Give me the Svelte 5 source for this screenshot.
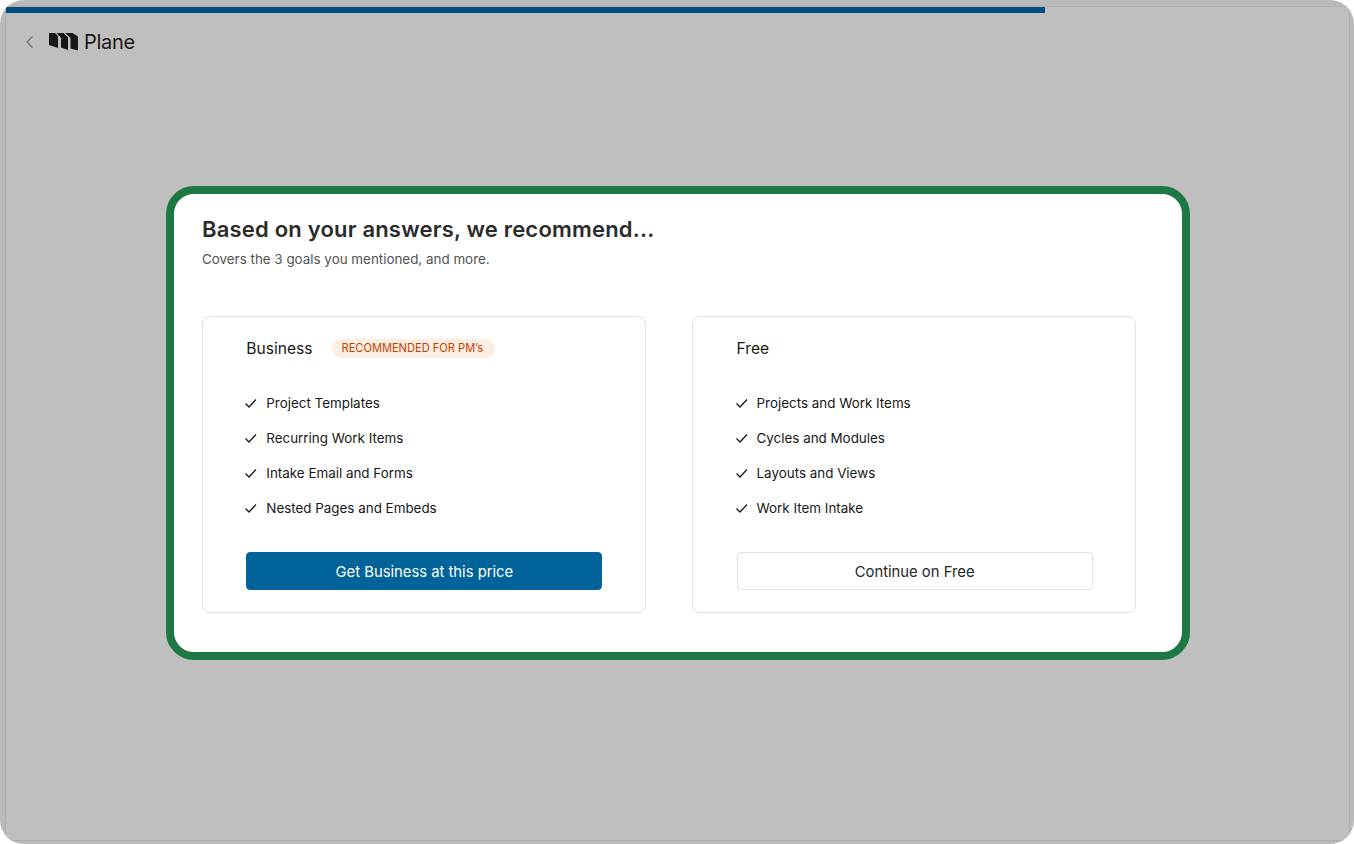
<script>
  const plans = [
    {
      name: "Business",
      badge: "RECOMMENDED FOR PM’s",
      features: ["Project Templates", "Recurring Work Items", "Intake Email and Forms", "Nested Pages and Embeds"],
      action: "Get Business at this price",
      primary: true
    },
    {
      name: "Free",
      features: ["Projects and Work Items", "Cycles and Modules", "Layouts and Views", "Work Item Intake"],
      action: "Continue on Free",
      primary: false
    }
  ];
</script>

<div class="shell">
  <div class="frame">
    <div class="progressFill"></div>
    <header class="topBar">
      <svg class="back" width="12" height="16" viewBox="0 0 12 16" fill="none">
        <path d="M8.5 2.5 3 8l5.5 5.5" stroke="#737373" stroke-width="1.4" />
      </svg>
      <svg class="logo" width="30" height="20" viewBox="0 0 30 20">
        <path d="M0 1h6.500L9 3.500V16l-3-1-6-2z" fill="#171717" />
        <path d="M7.500 1h7L19 4.500V18l-7-2.500V6z" fill="#171717" />
        <path d="M16 1h7.500L29 4.500V18.500l-7.500-2V6z" fill="#171717" />
        <path d="M6.500 1l4.500 4.500V16M15 1l5 4.500V18" stroke="#bfbfbf" stroke-width="1" fill="none" />
      </svg>
      <span class="brand">Plane</span>
    </header>

    <main class="center">
      <section class="panel">
        <h1>Based on your answers, we recommend...</h1>
        <p class="sub">Covers the 3 goals you mentioned, and more.</p>
        <div class="plans">
          {#each plans as plan}
            <article class="plan">
              <div class="planHead">
                <span class="planName">{plan.name}</span>
                {#if plan.badge}
                  <span class="badge">{plan.badge}</span>
                {/if}
              </div>
              <ul>
                {#each plan.features as feature}
                  <li>
                    <svg width="14" height="14" viewBox="0 0 14 14" fill="none">
                      <path d="M1.500 7.500 5 11l7-7.500" stroke="#171717" stroke-width="1.300" />
                    </svg>
                    {feature}
                  </li>
                {/each}
              </ul>
              <button class:primary={plan.primary}>{plan.action}</button>
            </article>
          {/each}
        </div>
      </section>
    </main>
  </div>
</div>

<style>
  :global(body) {
    margin: 0;
    background: #fff;
  }

  .shell {
    width: 1354px;
    height: 844px;
    box-sizing: border-box;
    padding: 6px 4px 3px 5px;
    background: #bababa;
    border-radius: 24px;
    font-family: Inter, "Liberation Sans", sans-serif;
    overflow: hidden;
  }

  .frame {
    height: 100%;
    box-sizing: border-box;
    display: flex;
    flex-direction: column;
    background: #bfbfbf;
    border: 1px solid #aeaeae;
  }

  .progressFill {
    flex: none;
    width: 1039px;
    height: 6px;
    background: #004c7f;
  }

  .topBar {
    display: flex;
    align-items: center;
    height: 58px;
    flex: none;
    padding-left: 18px;
  }

  .back {
    margin-right: 13px;
  }

  .brand {
    margin-left: 5px;
    font-size: 20px;
    letter-spacing: -0.3px;
    color: #171717;
  }

  .center {
    flex: 1;
    display: flex;
    align-items: flex-start;
    padding: 115px 0 0 160px;
  }

  .panel {
    width: 1024px;
    height: 474px;
    flex: none;
    box-sizing: border-box;
    padding: 20px 45.7px 0 28px;
    background: #fff;
    border: 8px solid #1d7844;
    border-radius: 28px;
  }

  h1 {
    margin: 0;
    font-size: 22px;
    line-height: 31px;
    font-weight: 600;
    letter-spacing: 0.2px;
    color: #2b2b2b;
  }

  .sub {
    margin: 5px 0 0;
    font-size: 13.4px;
    line-height: 18px;
    color: #525252;
  }

  .plans {
    display: grid;
    grid-template-columns: 1fr 1fr;
    gap: 46.2px;
    margin-top: 48px;
  }

  .plan {
    height: 297px;
    box-sizing: border-box;
    padding: 20px 42.6px 0 43.3px;
    border: 1px solid #e0e0e0;
    border-radius: 8px;
  }

  .planHead {
    display: flex;
    align-items: center;
    gap: 19px;
    height: 22px;
  }

  .planName {
    font-size: 15.6px;
    color: #171717;
  }

  .badge {
    padding: 2px 12px 2px 10px;
    background: #fdeee3;
    border-radius: 10px;
    font-size: 11.1px;
    line-height: 15px;
    color: #c43e00;
  }

  ul {
    list-style: none;
    margin: 34px 0 0;
    padding: 0;
    display: flex;
    flex-direction: column;
    gap: 15px;
  }

  li {
    display: flex;
    align-items: center;
    gap: 8px;
    height: 20px;
    font-size: 13.4px;
    color: #171717;
  }

  li svg {
    margin-left: -2px;
  }

  button {
    display: block;
    width: 100%;
    height: 38px;
    margin-top: 34px;
    padding-top: 3px;
    background: #fff;
    border: 1px solid #e0e0e0;
    border-radius: 4px;
    font-family: inherit;
    font-size: 14.8px;
    color: #262626;
  }

  button.primary {
    background: #006399;
    border-color: #006399;
    color: #fff;
  }
</style>
